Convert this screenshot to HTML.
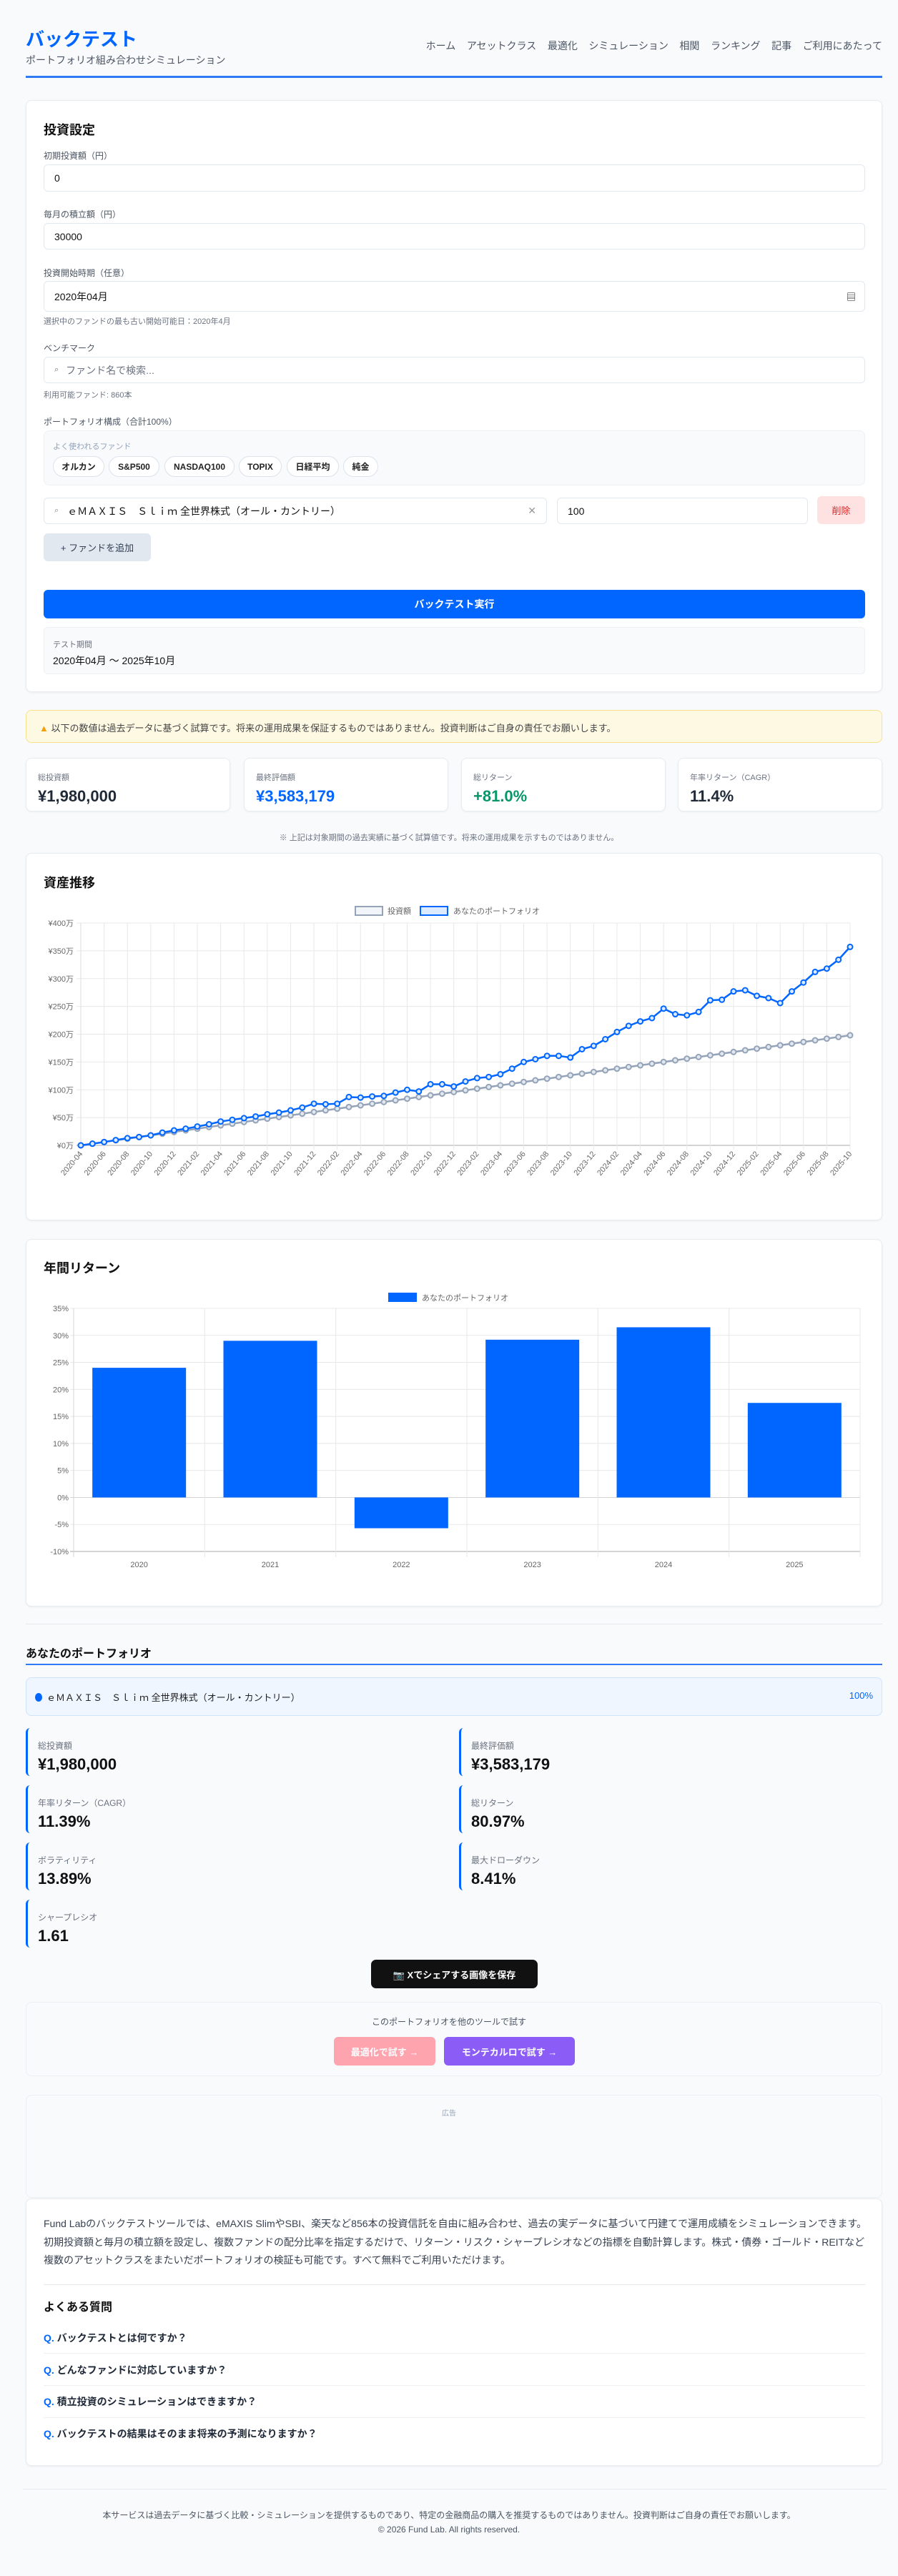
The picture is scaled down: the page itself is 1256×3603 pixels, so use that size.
<!DOCTYPE html>
<html lang="ja"><head><meta charset="utf-8">
<style>
*{box-sizing:border-box;margin:0;padding:0}
body{width:1256px;height:3603px;background:#f8fafc;font-family:"Liberation Sans","Noto Sans CJK JP",sans-serif;color:#1f2937;position:relative;overflow:hidden}
.a{position:absolute}
.card{position:absolute;left:36px;width:1198px;background:#fff;border:1px solid #e8ecf1;border-radius:8px;box-shadow:0 1px 3px rgba(0,0,0,.06)}
.lbl{position:absolute;left:61px;font-size:12px;color:#4b5563}
.inp{position:absolute;left:61px;width:1149px;border:1px solid #e2e8f0;border-radius:6px;background:#fff;font-size:14px;padding-left:14px;display:flex;align-items:center;color:#111}
.chip{position:absolute;top:638px;height:29px;border:1px solid #dde3ea;border-radius:15px;background:#fff;font-size:12px;font-weight:bold;display:flex;align-items:center;justify-content:center;color:#222}
.stat{position:absolute;top:1060px;height:75px;width:286px;background:#fff;border:1px solid #e8ecf1;border-radius:8px;box-shadow:0 1px 3px rgba(0,0,0,.05);padding:18px 0 0 16px}
.stat .l{font-size:11px;color:#6b7280}
.stat .v{font-size:22px;font-weight:bold;margin-top:6px}
.met{position:absolute;width:590px;height:67px;border-left:3px solid #0066ff;border-radius:6px;padding:16px 0 0 14px}
.met .l{font-size:12px;color:#6b7280}
.met .v{font-size:22px;font-weight:bold;margin-top:5px;color:#111}
.q{position:absolute;left:61px;font-size:14px;font-weight:bold;color:#1f2937}
.q b{color:#0066ff}
.sep{position:absolute;left:61px;width:1149px;height:1px;background:#eef0f3}
</style></head><body>

<div class="a" style="left:36px;top:35px;font-size:26px;font-weight:bold;color:#0066ff">バックテスト</div>
<div class="a" style="left:36px;top:74px;font-size:14px;color:#4b5563">ポートフォリオ組み合わせシミュレーション</div>
<div class="a" style="right:22px;top:54px;font-size:14px;color:#4b5563;word-spacing:0">
<span>ホーム</span>&nbsp;&nbsp;&nbsp;&nbsp;<span>アセットクラス</span>&nbsp;&nbsp;&nbsp;&nbsp;<span>最適化</span>&nbsp;&nbsp;&nbsp;&nbsp;<span>シミュレーション</span>&nbsp;&nbsp;&nbsp;&nbsp;<span>相関</span>&nbsp;&nbsp;&nbsp;&nbsp;<span>ランキング</span>&nbsp;&nbsp;&nbsp;&nbsp;<span>記事</span>&nbsp;&nbsp;&nbsp;&nbsp;<span>ご利用にあたって</span></div>
<div class="a" style="left:36px;top:106px;width:1198px;height:3px;background:#2f7bf5"></div>

<!-- form card -->
<div class="card" style="top:140px;height:828px"></div>
<div class="a" style="left:61px;top:168px;font-size:18px;font-weight:bold;color:#111">投資設定</div>
<div class="lbl" style="top:209px">初期投資額（円）</div>
<div class="inp" style="top:230px;height:38px">0</div>
<div class="lbl" style="top:291px">毎月の積立額（円）</div>
<div class="inp" style="top:312px;height:37px">30000</div>
<div class="lbl" style="top:373px">投資開始時期（任意）</div>
<div class="inp" style="top:393px;height:43px">2020年04月<span style="position:absolute;right:12px;font-size:13px">▤</span></div>
<div class="a" style="left:61px;top:441px;font-size:11px;color:#6b7280">選択中のファンドの最も古い開始可能日：2020年4月</div>
<div class="lbl" style="top:478px">ベンチマーク</div>
<div class="inp" style="top:499px;height:37px;color:#6b7280"><span style="font-size:11px;margin-right:10px">⌕</span>ファンド名で検索...</div>
<div class="a" style="left:61px;top:544px;font-size:11px;color:#6b7280">利用可能ファンド: 860本</div>
<div class="lbl" style="top:581px">ポートフォリオ構成（合計100%）</div>
<div class="a" style="left:61px;top:602px;width:1149px;height:77px;background:#f8fafc;border:1px solid #eef0f3;border-radius:8px"></div>
<div class="a" style="left:74px;top:616px;font-size:11px;color:#94a3b8">よく使われるファンド</div>
<div class="chip" style="left:74px;width:72px">オルカン</div>
<div class="chip" style="left:152px;width:71px">S&amp;P500</div>
<div class="chip" style="left:230px;width:98px">NASDAQ100</div>
<div class="chip" style="left:334px;width:60px">TOPIX</div>
<div class="chip" style="left:401px;width:73px">日経平均</div>
<div class="chip" style="left:480px;width:49px">純金</div>
<div class="inp" style="top:696px;height:37px;width:704px;color:#111"><span style="font-size:11px;color:#888;margin-right:12px">⌕</span>ｅＭＡＸＩＳ　Ｓｌｉｍ 全世界株式（オール・カントリー）<span style="position:absolute;right:14px;color:#999">✕</span></div>
<div class="inp" style="left:779px;top:696px;height:37px;width:351px">100</div>
<div class="a" style="left:1143px;top:694px;width:67px;height:39px;background:#fee2e2;border-radius:6px;color:#dc2626;font-size:13px;display:flex;align-items:center;justify-content:center">削除</div>
<div class="a" style="left:61px;top:746px;width:150px;height:39px;background:#e2e8f0;border-radius:6px;font-size:13px;color:#334155;display:flex;align-items:center;justify-content:center">+ ファンドを追加</div>
<div class="a" style="left:61px;top:825px;width:1149px;height:40px;background:#0066ff;border-radius:6px;color:#fff;font-size:14px;font-weight:bold;display:flex;align-items:center;justify-content:center">バックテスト実行</div>
<div class="a" style="left:61px;top:877px;width:1149px;height:66px;background:#f8fafc;border:1px solid #eef0f3;border-radius:6px"></div>
<div class="a" style="left:74px;top:893px;font-size:11px;color:#6b7280">テスト期間</div>
<div class="a" style="left:74px;top:914px;font-size:14px;color:#111">2020年04月 〜 2025年10月</div>

<div class="a" style="left:36px;top:993px;width:1198px;height:46px;background:#fef9e3;border:1px solid #fbe08a;border-radius:8px;font-size:13px;color:#444;padding:14px 0 0 18px"><span style="color:#f59e0b">▲</span> 以下の数値は過去データに基づく試算です。将来の運用成果を保証するものではありません。投資判断はご自身の責任でお願いします。</div>

<div class="stat" style="left:36px"><div class="l">総投資額</div><div class="v">¥1,980,000</div></div>
<div class="stat" style="left:341px"><div class="l">最終評価額</div><div class="v" style="color:#0066ff">¥3,583,179</div></div>
<div class="stat" style="left:645px"><div class="l">総リターン</div><div class="v" style="color:#059669">+81.0%</div></div>
<div class="stat" style="left:948px"><div class="l">年率リターン（CAGR）</div><div class="v">11.4%</div></div>
<div class="a" style="left:0;width:1256px;top:1163px;text-align:center;font-size:11px;color:#6b7280">※ 上記は対象期間の過去実績に基づく試算値です。将来の運用成果を示すものではありません。</div>

<div class="card" style="top:1193px;height:514px"></div>
<div class="a" style="left:61px;top:1221px;font-size:18px;font-weight:bold;color:#111">資産推移</div>
<svg id="lc" class="a" style="left:0;top:1193px" width="1256" height="514" viewBox="0 1193 1256 514"></svg>

<div class="card" style="top:1733px;height:514px"></div>
<div class="a" style="left:61px;top:1760px;font-size:18px;font-weight:bold;color:#111">年間リターン</div>
<svg id="bc" class="a" style="left:0;top:1733px" width="1256" height="514" viewBox="0 1733 1256 514"></svg>

<div class="a" style="left:36px;top:2271px;width:1198px;height:1px;background:#e5e7eb"></div>
<div class="a" style="left:36px;top:2299px;font-size:16px;font-weight:bold;color:#111">あなたのポートフォリオ</div>
<div class="a" style="left:36px;top:2327px;width:1198px;height:2px;background:#2f7bf5"></div>
<div class="a" style="left:36px;top:2346px;width:1198px;height:54px;background:#eff6ff;border:1px solid #cfe3fb;border-radius:8px;font-size:13px;color:#222;padding:17px 0 0 12px"><span style="display:inline-block;width:10px;height:12px;border-radius:50%;background:#0066ff;vertical-align:-1px;margin-right:6px"></span>ｅＭＡＸＩＳ　Ｓｌｉｍ 全世界株式（オール・カントリー）<span style="position:absolute;right:12px;color:#0066ff">100%</span></div>
<div class="met" style="left:36px;top:2417px"><div class="l">総投資額</div><div class="v">¥1,980,000</div></div>
<div class="met" style="left:642px;top:2417px"><div class="l">最終評価額</div><div class="v">¥3,583,179</div></div>
<div class="met" style="left:36px;top:2497px"><div class="l">年率リターン（CAGR）</div><div class="v">11.39%</div></div>
<div class="met" style="left:642px;top:2497px"><div class="l">総リターン</div><div class="v">80.97%</div></div>
<div class="met" style="left:36px;top:2577px"><div class="l">ボラティリティ</div><div class="v">13.89%</div></div>
<div class="met" style="left:642px;top:2577px"><div class="l">最大ドローダウン</div><div class="v">8.41%</div></div>
<div class="met" style="left:36px;top:2657px"><div class="l">シャープレシオ</div><div class="v">1.61</div></div>
<div class="a" style="left:519px;top:2741px;width:233px;height:40px;background:#111;border-radius:7px;color:#fff;font-size:13px;font-weight:bold;display:flex;align-items:center;justify-content:center">📷 Xでシェアする画像を保存</div>

<div class="a" style="left:36px;top:2800px;width:1198px;height:104px;background:#f8fafc;border:1px solid #eceff3;border-radius:8px"></div>
<div class="a" style="left:0;width:1256px;top:2819px;text-align:center;font-size:12px;color:#4b5563">このポートフォリオを他のツールで試す</div>
<div class="a" style="left:467px;top:2849px;width:142px;height:40px;background:#fda4af;border-radius:6px;color:#fff;font-size:13px;font-weight:bold;display:flex;align-items:center;justify-content:center">最適化で試す →</div>
<div class="a" style="left:621px;top:2849px;width:183px;height:40px;background:#8b5cf6;border-radius:6px;color:#fff;font-size:13px;font-weight:bold;display:flex;align-items:center;justify-content:center">モンテカルロで試す →</div>

<div class="a" style="left:36px;top:2930px;width:1198px;height:144px;background:#f8fafc;border:1px solid #eceff3;border-radius:8px"></div>
<div class="a" style="left:0;width:1256px;top:2947px;text-align:center;font-size:10px;color:#94a3b8">広告</div>

<div class="card" style="top:3075px;height:374px"></div>
<div class="a" style="left:61px;top:3098px;width:1152px;font-size:14px;line-height:25.5px;color:#374151">Fund Labのバックテストツールでは、eMAXIS SlimやSBI、楽天など856本の投資信託を自由に組み合わせ、過去の実データに基づいて円建てで運用成績をシミュレーションできます。初期投資額と毎月の積立額を設定し、複数ファンドの配分比率を指定するだけで、リターン・リスク・シャープレシオなどの指標を自動計算します。株式・債券・ゴールド・REITなど複数のアセットクラスをまたいだポートフォリオの検証も可能です。すべて無料でご利用いただけます。</div>
<div class="sep" style="top:3195px;background:#e5e7eb"></div>
<div class="a" style="left:61px;top:3213px;font-size:16px;font-weight:bold;color:#111">よくある質問</div>
<div class="q" style="top:3260px"><b>Q.</b> バックテストとは何ですか？</div>
<div class="sep" style="top:3291px"></div>
<div class="q" style="top:3305px"><b>Q.</b> どんなファンドに対応していますか？</div>
<div class="sep" style="top:3336px"></div>
<div class="q" style="top:3349px"><b>Q.</b> 積立投資のシミュレーションはできますか？</div>
<div class="sep" style="top:3381px"></div>
<div class="q" style="top:3394px"><b>Q.</b> バックテストの結果はそのまま将来の予測になりますか？</div>

<div class="a" style="left:32px;top:3481px;width:1208px;height:1px;background:#e5e7eb"></div>
<div class="a" style="left:0;width:1256px;top:3509px;text-align:center;font-size:12px;color:#4b5563">本サービスは過去データに基づく比較・シミュレーションを提供するものであり、特定の金融商品の購入を推奨するものではありません。投資判断はご自身の責任でお願いします。</div>
<div class="a" style="left:0;width:1256px;top:3531px;text-align:center;font-size:12px;color:#4b5563">© 2026 Fund Lab. All rights reserved.</div>

<script>
(function(){
var NS='http://www.w3.org/2000/svg';
function el(p,t,a,txt){var e=document.createElementNS(NS,t);for(var k in a)e.setAttribute(k,a[k]);if(txt!=null)e.textContent=txt;p.appendChild(e);return e;}
var s=document.getElementById('lc');
var x0=113,x1=1189,y0=1602,yt=1291,n=67,dx=(x1-x0)/(n-1),k=(y0-yt)/400;
var F='Liberation Sans, Noto Sans CJK JP, sans-serif';
for(var i=0;i<=8;i++){var y=y0-i*50*k;el(s,'line',{x1:x0-6,x2:x1,y1:y,y2:y,stroke:i==0?'#d4d4d4':'#e8e8e8','stroke-width':i==0?2:1});
el(s,'text',{x:x0-10,y:y+4,'text-anchor':'end','font-size':11,fill:'#666','font-family':F},'¥'+(i*50)+'万');}
for(var i=0;i<n;i+=2){var m=3+i,yr=2020+Math.floor(m/12),mo=m%12+1;var x=x0+i*dx;
el(s,'line',{x1:x,x2:x,y1:yt,y2:y0+6,stroke:'#e8e8e8'});
el(s,'text',{x:0,y:0,transform:'translate('+(x+3)+','+(y0+12)+') rotate(-50)','text-anchor':'end','font-size':11,fill:'#666','font-family':F},yr+'-'+(mo<10?'0':'')+mo);}
el(s,'line',{x1:x0,x2:x0,y1:yt,y2:y0,stroke:'#ddd'});
var pv=[0,3,6,9.5,13,15,18,23,27,30,34,38,43,46,49,52,56,59,63,68,75,74,75,87,86,88,89,95,100,97,110,110,106,115,121,123,128,138,150,155,161,161,158,173,179,191,204,215,223,229,246,236,234,240,261,262,277,279,269,265,256,277,293,312,318,334,357];
function series(vals,col,fill){var pts=vals.map(function(v,i){return (x0+i*dx).toFixed(1)+','+(y0-v*k).toFixed(1)}).join(' ');
el(s,'polyline',{points:pts,fill:'none',stroke:col,'stroke-width':2.5});
vals.forEach(function(v,i){el(s,'circle',{cx:x0+i*dx,cy:y0-v*k,r:3.5,fill:fill,stroke:col,'stroke-width':2});});}
var inv=[];for(var i=0;i<n;i++)inv.push(i*3);
series(inv,'#94a3b8','#e2e8f0');
series(pv,'#0066ff','#dbeafe');
el(s,'rect',{x:497,y:1268,width:38,height:12,fill:'#f1f5f9',stroke:'#94a3b8','stroke-width':2});
el(s,'text',{x:542,y:1278,'font-size':11,fill:'#666','font-family':F},'投資額');
el(s,'rect',{x:588,y:1268,width:38,height:12,fill:'#dbeafe',stroke:'#0066ff','stroke-width':2});
el(s,'text',{x:634,y:1278,'font-size':11,fill:'#666','font-family':F},'あなたのポートフォリオ');

var b=document.getElementById('bc');
var bx0=103,bx1=1203,by35=1830,pk=(2170-1830)/45,zero=by35+35*pk;
for(var p=35;p>=-10;p-=5){var y=by35+(35-p)*pk;el(b,'line',{x1:bx0-5,x2:bx1,y1:y,y2:y,stroke:(p==0||p==-10)?'#d4d4d4':'#e8e8e8','stroke-width':(p==-10)?2:1});
el(b,'text',{x:bx0-7,y:y+4,'text-anchor':'end','font-size':11,fill:'#666','font-family':F},p+'%');}
var cw=(bx1-bx0)/6,vals=[24,29,-5.7,29.2,31.5,17.5];
for(var i=0;i<=6;i++){var x=bx0+i*cw;el(b,'line',{x1:x,x2:x,y1:by35,y2:2178,stroke:'#e8e8e8'});}
el(b,'line',{x1:bx0,x2:bx0,y1:by35,y2:2178,stroke:'#d4d4d4'});
vals.forEach(function(v,i){var cx=bx0+cw*(i+.5),w=131;var yv=zero-v*pk;
el(b,'rect',{x:cx-w/2,y:Math.min(yv,zero),width:w,height:Math.abs(v*pk),fill:'#0066ff'});
el(b,'text',{x:cx,y:2192,'text-anchor':'middle','font-size':11,fill:'#666','font-family':F},2020+i);});
el(b,'rect',{x:543,y:1808,width:40,height:13,fill:'#0066ff'});
el(b,'text',{x:590,y:1819,'font-size':11,fill:'#666','font-family':F},'あなたのポートフォリオ');
})();
</script>
</body></html>
